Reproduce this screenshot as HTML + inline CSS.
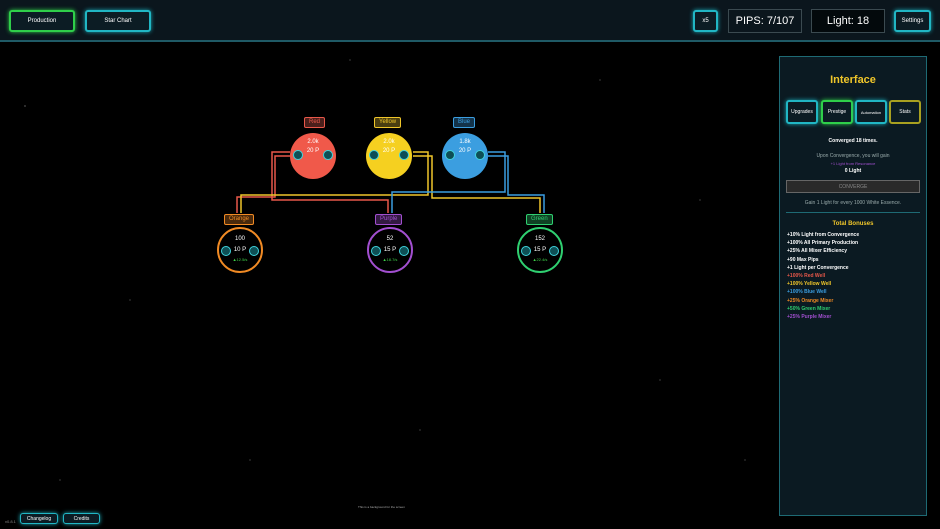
<!DOCTYPE html>
<html><head><meta charset="utf-8"><style>
*{margin:0;padding:0;box-sizing:border-box}
body{width:940px;height:529px;background:#000;overflow:hidden;position:relative;font-family:"Liberation Sans",sans-serif;color:#fff}
.hdr{position:absolute;left:0;top:0;width:940px;height:42px;background:#0b161d;border-bottom:2px solid #1f5a66}
.btn{position:absolute;border:2px solid #21b6c4;border-radius:3px;background:#0c1c24;font-size:6px;display:flex;align-items:center;justify-content:center;box-shadow:0 0 4px #1aa6b3}
.box{position:absolute;border:1px solid #3b4a50;background:#03090c;font-size:11px;display:flex;align-items:center;justify-content:center}
.panel{position:absolute;left:779px;top:56px;width:148px;height:460px;background:#0b1a22;border:1px solid #1e6a74}
.c{position:absolute;border-radius:50%;width:46px;height:46px;font-size:6px;text-align:center}
.lbl{position:absolute;font-size:6px;height:11px;line-height:9px;padding:0 4px;border:1px solid;border-radius:2px}
.dot{position:absolute;width:10px;height:10px;border-radius:50%;background:#0e4f55;border:1px solid #3fd4dd;top:17px}
.p{font-size:5px;line-height:8.2px}
</style></head><body>
<svg width="940" height="529" style="position:absolute;left:0;top:0">
<g fill="#fff" opacity=".6"><circle cx="25" cy="106" r=".6"/><circle cx="130" cy="300" r=".5"/><circle cx="600" cy="80" r=".5"/><circle cx="700" cy="200" r=".5"/><circle cx="420" cy="430" r=".5"/><circle cx="60" cy="480" r=".5"/><circle cx="250" cy="460" r=".5"/><circle cx="660" cy="380" r=".5"/><circle cx="350" cy="60" r=".5"/><circle cx="745" cy="460" r=".5"/></g>
<g fill="none" stroke-width="1.5">
<path d="M290 152H272V200H388V213M290 156H275V197H237V213" stroke="#e8584a"/>
<path d="M413 152H428V195H241V213M413 156H432V198H540V213" stroke="#f0c62a"/>
<path d="M488 152H505V192H392V213M488 156H508V195H544V213" stroke="#3b9ee0"/>
</g></svg>
<div class="hdr"></div>
<div class="btn" style="left:9px;top:10px;width:66px;height:22px;border-color:#2fcf4a;box-shadow:0 0 4px #2fcf4a">Production</div>
<div class="btn" style="left:85px;top:10px;width:66px;height:22px">Star Chart</div>
<div class="btn" style="left:693px;top:10px;width:25px;height:22px">x5</div>
<div class="box" style="left:728px;top:9px;width:74px;height:24px;background:#0b161d">PIPS: 7/107</div>
<div class="box" style="left:811px;top:9px;width:74px;height:24px">Light: 18</div>
<div class="btn" style="left:894px;top:10px;width:37px;height:22px">Settings</div>

<div class="lbl" style="left:304px;top:117px;color:#e8584a;border-color:#e8584a;background:#4a1f1b">Red</div>
<div class="lbl" style="left:374px;top:117px;color:#f0c62a;border-color:#f0c62a;background:#4a3e10">Yellow</div>
<div class="lbl" style="left:453px;top:117px;color:#3b9ee0;border-color:#3b9ee0;background:#13334a">Blue</div>
<div class="c" style="left:290px;top:133px;background:#f0594a"><div style="margin-top:6px">2.0k</div><div class="dot" style="left:3px"></div><div class="dot" style="right:3px"></div><div style="margin-top:3px">20 P</div></div>
<div class="c" style="left:366px;top:133px;background:#f5d020"><div style="margin-top:6px">2.0k</div><div class="dot" style="left:3px"></div><div class="dot" style="right:3px"></div><div style="margin-top:3px">20 P</div></div>
<div class="c" style="left:442px;top:133px;background:#3b9ee0"><div style="margin-top:6px">1.8k</div><div class="dot" style="left:3px"></div><div class="dot" style="right:3px"></div><div style="margin-top:3px">20 P</div></div>

<div class="lbl" style="left:224px;top:214px;color:#f08a24;border-color:#f08a24;background:#4a2a0c">Orange</div>
<div class="lbl" style="left:375px;top:214px;color:#a24fd0;border-color:#a24fd0;background:#331a42">Purple</div>
<div class="lbl" style="left:526px;top:214px;color:#2fcf70;border-color:#2fcf70;background:#0f4224">Green</div>
<div class="c" style="left:217px;top:227px;border:2px solid #f08a24;background:#000"><div style="margin-top:7px">100</div><div class="dot" style="left:2px"></div><div class="dot" style="right:2px"></div><div style="margin-top:5px">10 P</div><div style="color:#3fd44a;font-size:4px;margin-top:4px">▲12.5/s</div></div>
<div class="c" style="left:367px;top:227px;border:2px solid #a24fd0;background:#000"><div style="margin-top:7px">52</div><div class="dot" style="left:2px"></div><div class="dot" style="right:2px"></div><div style="margin-top:5px">15 P</div><div style="color:#3fd44a;font-size:4px;margin-top:4px">▲18.7/s</div></div>
<div class="c" style="left:517px;top:227px;border:2px solid #2fcf70;background:#000"><div style="margin-top:7px">152</div><div class="dot" style="left:2px"></div><div class="dot" style="right:2px"></div><div style="margin-top:5px">15 P</div><div style="color:#3fd44a;font-size:4px;margin-top:4px">▲22.4/s</div></div>

<div class="panel">
<div style="text-align:center;color:#f0c62a;font-size:11px;font-weight:bold;margin-top:17px">Interface</div>
<div class="btn" style="left:6px;top:43px;width:32px;height:24px;font-size:5px">Upgrades</div>
<div class="btn" style="left:41px;top:43px;width:32px;height:24px;font-size:5px;border-color:#2fcf4a;box-shadow:0 0 4px #2fcf4a">Prestige</div>
<div class="btn" style="left:75px;top:43px;width:32px;height:24px;font-size:4px">Automation</div>
<div class="btn" style="left:109px;top:43px;width:32px;height:24px;font-size:5px;border-color:#a8a020;box-shadow:none">Stats</div>
<div style="position:absolute;top:81px;width:100%;text-align:center;font-size:5px;font-weight:bold">Converged 18 times.</div>
<div style="position:absolute;top:96px;width:100%;text-align:center;font-size:5px;color:#9aa">Upon Convergence, you will gain</div>
<div style="position:absolute;top:104px;width:100%;text-align:center;font-size:4px;color:#a24fd0">+1 Light from Resonance</div>
<div style="position:absolute;top:111px;width:100%;text-align:center;font-size:5px;font-weight:bold">0 Light</div>
<div style="position:absolute;left:6px;top:123px;width:134px;height:13px;border:1px solid #666;background:#2a2a2a;font-size:5px;color:#888;display:flex;align-items:center;justify-content:center">CONVERGE</div>
<div style="position:absolute;top:143px;width:100%;text-align:center;font-size:5px;color:#9aa">Gain 1 Light for every 1000 White Essence.</div>
<div style="position:absolute;left:6px;top:155px;width:134px;border-top:1px solid #1e6a74"></div>
<div style="position:absolute;top:164px;width:100%;text-align:center;font-size:6px;color:#f0c62a;font-weight:bold">Total Bonuses</div>
<div class="p" style="position:absolute;left:7px;top:174px;font-weight:bold">
<div>+10% Light from Convergence</div><div>+100% All Primary Production</div><div>+25% All Mixer Efficiency</div><div>+90 Max Pips</div><div>+1 Light per Convergence</div>
<div style="color:#e8584a">+100% Red Well</div><div style="color:#f0c62a">+100% Yellow Well</div><div style="color:#3b9ee0">+100% Blue Well</div><div style="color:#f08a24">+25% Orange Mixer</div><div style="color:#2fcf70">+50% Green Mixer</div><div style="color:#a24fd0">+25% Purple Mixer</div>
</div></div>

<div style="position:absolute;left:358px;top:505px;font-size:3px;color:#aaa">This is a background for the screen</div>
<div style="position:absolute;left:5px;top:519px;font-size:4px;color:#888">v0.8.1</div>
<div class="btn" style="left:20px;top:513px;width:38px;height:11px;font-size:5px;border-width:1px">Changelog</div>
<div class="btn" style="left:63px;top:513px;width:37px;height:11px;font-size:5px;border-width:1px">Credits</div>
</body></html>
